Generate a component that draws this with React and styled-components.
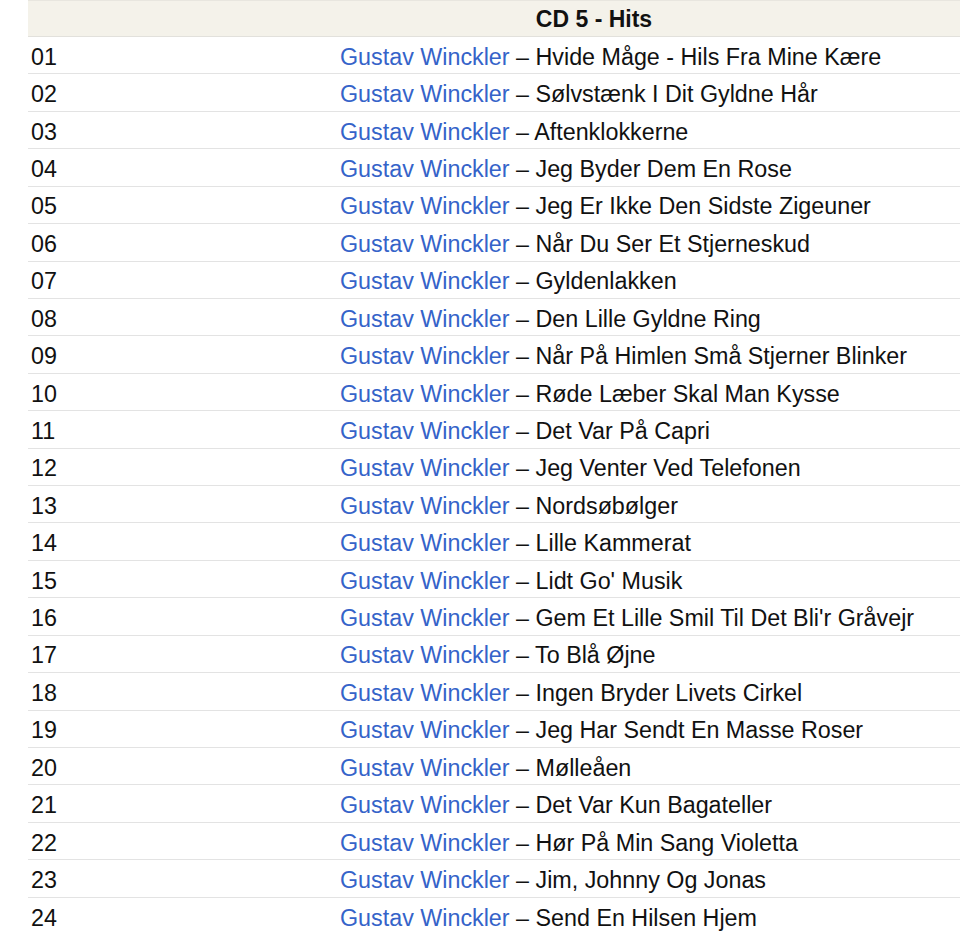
import React from "react";
import styled, { createGlobalStyle } from "styled-components";

const Global = createGlobalStyle`
  html, body { margin: 0; padding: 0; background: #ffffff; overflow: hidden; }
  body { font-family: "Liberation Sans", Arial, Helvetica, sans-serif; color: #111; }
`;

const Table = styled.div`
  margin-left: 28px;
  width: calc(100% - 28px);
  font-size: 23.3px;
`;

const Header = styled.div`
  height: 37px;
  box-sizing: border-box;
  padding: 2px 0 0 200px;
  background: #f4f2ea;
  border-top: 1px solid #e8e6df;
  border-bottom: 1px solid #e2e1dc;
  display: flex;
  align-items: center;
  justify-content: center;
  font-size: 23px;
  font-weight: bold;
  color: #111;
`;

const Row = styled.div`
  display: grid;
  grid-template-columns: 309px 1fr;
  align-items: center;
  height: 37.43px;
  box-sizing: border-box;
  border-bottom: ${(p) => (p.$last ? "none" : "1px solid #e3e3e3")};
  padding-left: 3px;
  padding-top: 4px;
  white-space: nowrap;
  overflow: hidden;
`;

const Num = styled.span`
  color: #111;
`;

const Track = styled.span`
  color: #111;
`;

const Artist = styled.a`
  color: #3563c9;
  text-decoration: none;
`;

const tracks = [
  "Hvide Måge - Hils Fra Mine Kære",
  "Sølvstænk I Dit Gyldne Hår",
  "Aftenklokkerne",
  "Jeg Byder Dem En Rose",
  "Jeg Er Ikke Den Sidste Zigeuner",
  "Når Du Ser Et Stjerneskud",
  "Gyldenlakken",
  "Den Lille Gyldne Ring",
  "Når På Himlen Små Stjerner Blinker",
  "Røde Læber Skal Man Kysse",
  "Det Var På Capri",
  "Jeg Venter Ved Telefonen",
  "Nordsøbølger",
  "Lille Kammerat",
  "Lidt Go' Musik",
  "Gem Et Lille Smil Til Det Bli'r Gråvejr",
  "To Blå Øjne",
  "Ingen Bryder Livets Cirkel",
  "Jeg Har Sendt En Masse Roser",
  "Mølleåen",
  "Det Var Kun Bagateller",
  "Hør På Min Sang Violetta",
  "Jim, Johnny Og Jonas",
  "Send En Hilsen Hjem",
];

export default function App() {
  return (
    <>
      <Global />
      <Table>
        <Header>CD 5 - Hits</Header>
        {tracks.map((t, i) => (
          <Row key={i} $last={i === tracks.length - 1}>
            <Num>{String(i + 1).padStart(2, "0")}</Num>
            <Track>
              <Artist href="#">Gustav Winckler</Artist> – {t}
            </Track>
          </Row>
        ))}
      </Table>
    </>
  );
}
